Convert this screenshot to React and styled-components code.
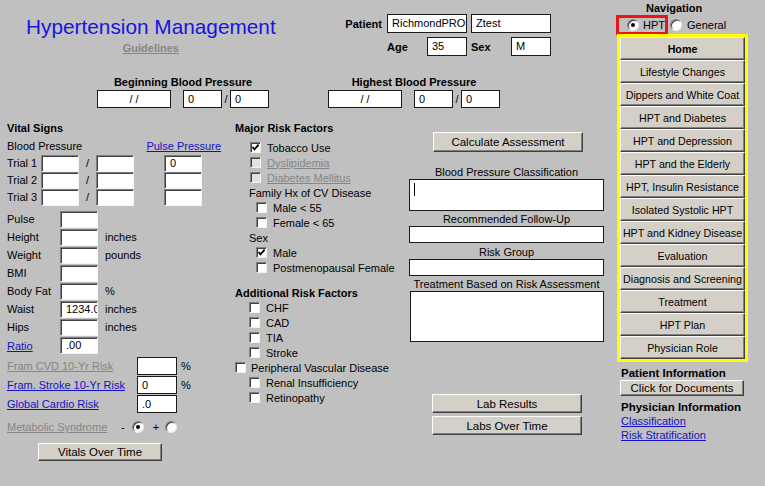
import React from "react";
import styled, { createGlobalStyle, css } from "styled-components";

const GlobalStyle = createGlobalStyle`
  html, body {
    margin: 0;
    padding: 0;
    background: #c0c0c0;
  }
  body {
    font-family: "Liberation Sans", Arial, sans-serif;
    font-size: 11px;
    color: #000;
  }
`;

const BLUE = "#1515e0";
const LINK = "#1212c4";
const GREY_TEXT = "#858585";

const Page = styled.div`
  width: 765px;
  height: 486px;
  display: flex;
  overflow: hidden;
  background: #c0c0c0;
`;

const Main = styled.div`
  width: 616px;
  display: flex;
  flex-direction: column;
`;

/* ---------- header ---------- */

const Header = styled.div`
  height: 75px;
  display: flex;
`;

const TitleBlock = styled.div`
  width: 343px;
  box-sizing: border-box;
  padding: 15px 0 0 26px;
  display: flex;
  align-items: flex-start;
`;

const TitleInner = styled.div`
  display: inline-flex;
  flex-direction: column;
  align-items: center;
`;

const Title = styled.h1`
  margin: 0;
  font-size: 20.8px;
  line-height: 24px;
  font-weight: normal;
  color: ${BLUE};
  white-space: nowrap;
`;

const GreyLink = styled.span`
  color: ${GREY_TEXT};
  text-decoration: underline;
  font-weight: ${(p) => (p.$bold ? "bold" : "normal")};
  white-space: nowrap;
`;

const Guidelines = styled(GreyLink)`
  margin-top: 3px;
  line-height: 13px;
`;

const PatientBlock = styled.div`
  padding-top: 14px;
  display: flex;
  flex-direction: column;
  gap: 4px;
`;

const PRow = styled.div`
  display: flex;
  align-items: center;
  gap: ${(p) => (p.$gap === undefined ? 4 : p.$gap)}px;
  padding-left: ${(p) => p.$indent || 0}px;
`;

const PLabel = styled.span`
  width: 40px;
  margin-left: ${(p) => p.$ml || 0}px;
  font-weight: bold;
  text-align: ${(p) => (p.$right ? "right" : "left")};
  padding-right: ${(p) => (p.$right ? 1 : 0)}px;
  box-sizing: border-box;
`;

const Field = styled.div`
  box-sizing: border-box;
  flex: none;
  width: ${(p) => p.$w}px;
  height: ${(p) => p.$h || 18}px;
  background: #fff;
  padding: 0 ${(p) => (p.$center ? 0 : 4)}px;
  line-height: ${(p) => (p.$h || 18) - 2}px;
  white-space: nowrap;
  overflow: hidden;
  text-align: ${(p) => (p.$center ? "center" : "left")};
  ${(p) =>
    p.$sunken
      ? css`
          border: 1px solid;
          border-color: #808080 #f4f4f4 #f4f4f4 #808080;
          box-shadow: inset 1px 1px 0 #404040;
          padding-left: 5px;
        `
      : css`
          border: 1px solid #1a1a1a;
        `}
`;

/* ---------- blood pressure row ---------- */

const BPRow = styled.div`
  display: flex;
`;

const BPGroup = styled.div`
  margin-left: ${(p) => p.$left}px;
  display: flex;
  flex-direction: column;
  align-items: center;
`;

const BoldLabel = styled.div`
  font-weight: bold;
  line-height: 14px;
  white-space: nowrap;
`;

const BPInputs = styled.div`
  margin-top: 1px;
  display: flex;
  align-items: center;
`;

const Slash = styled.span`
  width: ${(p) => p.$w || 8}px;
  text-align: center;
`;

/* ---------- columns ---------- */

const Columns = styled.div`
  margin-top: 12px;
  display: flex;
`;

const VitalsCol = styled.div`
  width: 234px;
  box-sizing: border-box;
  padding-left: 7px;
  display: flex;
  flex-direction: column;
  align-items: flex-start;
`;

const SectionTitle = styled.div`
  font-weight: bold;
  line-height: ${(p) => p.$lh || 16}px;
  margin-top: ${(p) => p.$mt || 0}px;
  padding-left: ${(p) => p.$indent || 0}px;
  white-space: nowrap;
`;

const BPHeader = styled.div`
  width: 214px;
  margin-top: 3px;
  line-height: 14px;
  display: flex;
  justify-content: space-between;
`;

const BlueLink = styled.span`
  color: ${LINK};
  text-decoration: underline;
  white-space: nowrap;
`;

const TrialGrid = styled.div`
  margin-top: 2px;
  display: grid;
  grid-template-columns: 34px 38px 17px 38px 30px 38px;
  grid-auto-rows: 17px;
  align-items: center;
`;

const Cell = styled.span`
  line-height: 17px;
  white-space: nowrap;
  padding-left: ${(p) => p.$pl || 0}px;
  text-align: ${(p) => (p.$center ? "center" : "left")};
`;

const MeasureGrid = styled.div`
  margin-top: 5px;
  display: grid;
  grid-template-columns: 53px 38px auto;
  row-gap: 1px;
  grid-auto-rows: 17px;
  align-items: center;
`;

const RiskGrid = styled.div`
  margin-top: 3px;
  display: grid;
  grid-template-columns: 130px 40px auto;
  row-gap: 1px;
  grid-auto-rows: 18px;
  align-items: center;
`;

const MetaRow = styled.div`
  margin-top: 7px;
  height: 14px;
  display: flex;
  align-items: center;
`;

const MetaLabel = styled(GreyLink)`
  width: 114px;
`;

const Sign = styled.span`
  margin-left: ${(p) => p.$ml || 0}px;
  line-height: 14px;
`;

const Radio = styled.span`
  flex: none;
  position: relative;
  box-sizing: border-box;
  width: 12px;
  height: 12px;
  margin-left: ${(p) => p.$ml || 0}px;
  border-radius: 50%;
  background: #fff;
  border: 1px solid;
  border-color: #808080 #eee #eee #808080;
  box-shadow: inset 1px 1px 0 #404040;

  ${(p) =>
    p.$on &&
    css`
      &::after {
        content: "";
        position: absolute;
        left: 3px;
        top: 3px;
        width: 4px;
        height: 4px;
        border-radius: 50%;
        background: #000;
      }
    `}
`;

const Button = styled.div`
  box-sizing: border-box;
  flex: none;
  width: ${(p) => p.$w || 124}px;
  height: ${(p) => p.$h || 18}px;
  margin-top: ${(p) => p.$mt || 0}px;
  margin-left: ${(p) => p.$ml || 0}px;
  background: #d4d0c8;
  border: 1px solid;
  border-color: #fff #404040 #404040 #fff;
  box-shadow: inset -1px -1px 0 #808080;
  display: flex;
  align-items: center;
  justify-content: center;
  font-size: ${(p) => p.$fs || 11}px;
  font-weight: ${(p) => (p.$bold ? "bold" : "normal")};
  white-space: nowrap;
`;

/* ---------- risk factors ---------- */

const RiskCol = styled.div`
  width: 175px;
  display: flex;
  flex-direction: column;
`;

const CheckList = styled.div`
  margin-top: ${(p) => p.$mt || 0}px;
  display: flex;
  flex-direction: column;
`;

const CheckRow = styled.div`
  height: 15px;
  display: flex;
  align-items: center;
  gap: ${(p) => p.$gap || 6}px;
  padding-left: ${(p) => p.$indent || 0}px;
  white-space: nowrap;
  color: ${(p) => (p.$dim ? GREY_TEXT : "#000")};
  text-decoration: ${(p) => (p.$dim ? "underline" : "none")};
`;

const Box = styled.span`
  flex: none;
  box-sizing: border-box;
  width: 11px;
  height: 11px;
  background: ${(p) => (p.$dim ? "#e4e2de" : "#fff")};
  border: 1px solid;
  border-color: #808080 #f2f2f2 #f2f2f2 #808080;
  box-shadow: inset 1px 1px 0 #404040;
  display: flex;
  align-items: center;
  justify-content: center;
`;

const CheckBox = ({ on, dim }) => (
  <Box $dim={dim}>
    {on && (
      <svg width="9" height="9" viewBox="0 0 9 9">
        <path d="M1.5 4 L3.5 6.3 L7.6 1.6" fill="none" stroke="#000" strokeWidth="1.8" />
      </svg>
    )}
  </Box>
);

/* ---------- assessment ---------- */

const AssessCol = styled.div`
  width: 195px;
  padding-top: 12px;
  display: flex;
  flex-direction: column;
  align-items: flex-start;
`;

const FieldLabel = styled.div`
  width: 195px;
  text-align: center;
  line-height: 14px;
  margin-top: ${(p) => p.$mt || 0}px;
  white-space: nowrap;
`;

const OutBox = styled.div`
  box-sizing: border-box;
  width: ${(p) => p.$w || 195}px;
  height: ${(p) => p.$h}px;
  margin-left: ${(p) => p.$ml || 0}px;
  background: #fff;
  border: 1px solid #1a1a1a;
  padding: 3px 4px;
`;

const Caret = styled.span`
  display: block;
  width: 1px;
  height: 13px;
  background: #000;
`;

/* ---------- sidebar ---------- */

const Sidebar = styled.div`
  width: 149px;
  padding-top: 2px;
  display: flex;
  flex-direction: column;
  align-items: flex-start;
`;

const NavTitle = styled(BoldLabel)`
  padding-left: 30px;
  line-height: 13px;
`;

const RadioRow = styled.div`
  height: 20px;
  display: flex;
  align-items: center;
`;

const RedBox = styled.div`
  box-sizing: border-box;
  width: 52px;
  height: 20px;
  border: 3px solid #e81616;
  padding-left: 8px;
  display: flex;
  align-items: center;
  gap: 4px;
`;

const RadioLabel = styled.span`
  margin-left: ${(p) => p.$ml || 0}px;
`;

const YellowBox = styled.div`
  box-sizing: border-box;
  width: 131px;
  margin: -1px 0 0 1px;
  border: 3px solid #ffff00;
  display: flex;
  flex-direction: column;
`;

const NavButton = styled(Button)`
  width: 100%;
  height: 23px;
  font-size: 10.7px;
`;

const SideLabel = styled(BoldLabel)`
  margin-top: ${(p) => p.$mt || 0}px;
  padding-left: 5px;
  font-size: 11.5px;
`;

const SideLink = styled(BlueLink)`
  display: block;
  padding-left: 5px;
  line-height: 14px;
`;

const navItems = [
  "Home",
  "Lifestyle Changes",
  "Dippers and White Coat",
  "HPT and Diabetes",
  "HPT and Depression",
  "HPT and the Elderly",
  "HPT,  Insulin Resistance",
  "Isolated Systolic HPT",
  "HPT and Kidney Disease",
  "Evaluation",
  "Diagnosis and Screening",
  "Treatment",
  "HPT Plan",
  "Physician Role",
];

const measures = [
  { label: "Pulse" },
  { label: "Height", unit: "inches" },
  { label: "Weight", unit: "pounds" },
  { label: "BMI" },
  { label: "Body Fat", unit: "%" },
  { label: "Waist", unit: "inches", value: "1234.00" },
  { label: "Hips", unit: "inches" },
  { label: "Ratio", value: ".00", link: true },
];

const risks = [
  { label: "Fram CVD 10-Yr Risk", unit: "%", dim: true },
  { label: "Fram. Stroke 10-Yr Risk", unit: "%", value: "0" },
  { label: "Global Cardio Risk", value: ".0" },
];

const majorRisks = [
  { label: "Tobacco Use", indent: 16, box: true, on: true },
  { label: "Dyslipidemia", indent: 16, box: true, dim: true },
  { label: "Diabetes Mellitus", indent: 16, box: true, dim: true },
  { label: "Family Hx of CV Disease", indent: 15 },
  { label: "Male < 55", indent: 22, box: true },
  { label: "Female < 65", indent: 22, box: true },
  { label: "Sex", indent: 15 },
  { label: "Male", indent: 22, box: true, on: true },
  { label: "Postmenopausal Female", indent: 22, box: true },
];

const additionalRisks = [
  { label: "CHF", indent: 15 },
  { label: "CAD", indent: 15 },
  { label: "TIA", indent: 15 },
  { label: "Stroke", indent: 15 },
  { label: "Peripheral Vascular Disease", indent: 1, gap: 5 },
  { label: "Renal Insufficiency", indent: 15 },
  { label: "Retinopathy", indent: 15 },
];

const BPEntry = ({ left, label }) => (
  <BPGroup $left={left}>
    <BoldLabel>{label}</BoldLabel>
    <BPInputs>
      <Field $w={74} $center>/ /</Field>
      <Slash $w={12} />
      <Field $w={39}>0</Field>
      <Slash>/</Slash>
      <Field $w={39}>0</Field>
    </BPInputs>
  </BPGroup>
);

export default function App() {
  return (
    <Page>
      <GlobalStyle />
      <Main>
        <Header>
          <TitleBlock>
            <TitleInner>
              <Title>Hypertension Management</Title>
              <Guidelines $bold>Guidelines</Guidelines>
            </TitleInner>
          </TitleBlock>
          <PatientBlock>
            <PRow>
              <PLabel $right>Patient</PLabel>
              <Field $w={80} $h={19}>RichmondPROD</Field>
              <Field $w={80} $h={19}>Ztest</Field>
            </PRow>
            <PRow $indent={44} $gap={0}>
              <PLabel>Age</PLabel>
              <Field $w={40} $h={19}>35</Field>
              <PLabel $ml={4}>Sex</PLabel>
              <Field $w={40} $h={19}>M</Field>
            </PRow>
          </PatientBlock>
        </Header>

        <BPRow>
          <BPEntry left={97} label="Beginning Blood Pressure" />
          <BPEntry left={59} label="Highest Blood Pressure" />
        </BPRow>

        <Columns>
          <VitalsCol>
            <SectionTitle>Vital Signs</SectionTitle>
            <BPHeader>
              <span>Blood Pressure</span>
              <BlueLink>Pulse Pressure</BlueLink>
            </BPHeader>
            <TrialGrid>
              {[1, 2, 3].map((n) => (
                <React.Fragment key={n}>
                  <Cell>Trial {n}</Cell>
                  <Field $w={38} $h={17} $sunken />
                  <Cell $center>/</Cell>
                  <Field $w={38} $h={17} $sunken />
                  <span />
                  <Field $w={38} $h={17} $sunken>{n === 1 ? "0" : ""}</Field>
                </React.Fragment>
              ))}
            </TrialGrid>
            <MeasureGrid>
              {measures.map((m) => (
                <React.Fragment key={m.label}>
                  {m.link ? <BlueLink>{m.label}</BlueLink> : <Cell>{m.label}</Cell>}
                  <Field $w={38} $h={17} $sunken>{m.value || ""}</Field>
                  <Cell $pl={7}>{m.unit || ""}</Cell>
                </React.Fragment>
              ))}
            </MeasureGrid>
            <RiskGrid>
              {risks.map((r) => (
                <React.Fragment key={r.label}>
                  {r.dim ? <GreyLink>{r.label}</GreyLink> : <BlueLink>{r.label}</BlueLink>}
                  <Field $w={40} $h={18}>{r.value || ""}</Field>
                  <Cell $pl={4}>{r.unit || ""}</Cell>
                </React.Fragment>
              ))}
            </RiskGrid>
            <MetaRow>
              <MetaLabel>Metabolic Syndrome</MetaLabel>
              <Sign>-</Sign>
              <Radio $ml={7} $on />
              <Sign $ml={9}>+</Sign>
              <Radio $ml={6} />
            </MetaRow>
            <Button $w={124} $h={18} $mt={9} $ml={31} $fs={11.5}>
              Vitals Over Time
            </Button>
          </VitalsCol>

          <RiskCol>
            <SectionTitle $indent={1}>Major Risk Factors</SectionTitle>
            <CheckList $mt={4}>
              {majorRisks.map((r) => (
                <CheckRow key={r.label} $indent={r.indent} $dim={r.dim}>
                  {r.box && <CheckBox on={r.on} dim={r.dim} />}
                  <span>{r.label}</span>
                </CheckRow>
              ))}
            </CheckList>
            <SectionTitle $lh={14} $mt={11} $indent={1}>
              Additional Risk Factors
            </SectionTitle>
            <CheckList>
              {additionalRisks.map((r) => (
                <CheckRow key={r.label} $indent={r.indent} $gap={r.gap}>
                  <CheckBox />
                  <span>{r.label}</span>
                </CheckRow>
              ))}
            </CheckList>
          </RiskCol>

          <AssessCol>
            <Button $w={150} $h={20} $ml={24} $fs={11.5}>
              Calculate Assessment
            </Button>
            <FieldLabel $mt={13}>Blood Pressure Classification</FieldLabel>
            <OutBox $h={32}>
              <Caret />
            </OutBox>
            <FieldLabel $mt={1}>Recommended Follow-Up</FieldLabel>
            <OutBox $h={17} />
            <FieldLabel $mt={2}>Risk Group</FieldLabel>
            <OutBox $h={17} />
            <FieldLabel $mt={1}>Treatment Based on Risk Assessment</FieldLabel>
            <OutBox $h={51} $w={194} $ml={1} />
            <Button $w={150} $h={19} $mt={52} $ml={23} $fs={11.5}>
              Lab Results
            </Button>
            <Button $w={150} $h={19} $mt={3} $ml={23} $fs={11.5}>
              Labs Over Time
            </Button>
          </AssessCol>
        </Columns>
      </Main>

      <Sidebar>
        <NavTitle>Navigation</NavTitle>
        <RadioRow>
          <RedBox>
            <Radio $on />
            <RadioLabel>HPT</RadioLabel>
          </RedBox>
          <Radio $ml={2} />
          <RadioLabel $ml={5}>General</RadioLabel>
        </RadioRow>
        <YellowBox>
          {navItems.map((item, i) => (
            <NavButton key={item} $bold={i === 0}>
              {item}
            </NavButton>
          ))}
        </YellowBox>
        <SideLabel $mt={4}>Patient Information</SideLabel>
        <Button $w={124} $h={16} $ml={4} $fs={11.5}>
          Click for Documents
        </Button>
        <SideLabel $mt={4}>Physician Information</SideLabel>
        <SideLink>Classification</SideLink>
        <SideLink>Risk Stratification</SideLink>
      </Sidebar>
    </Page>
  );
}
